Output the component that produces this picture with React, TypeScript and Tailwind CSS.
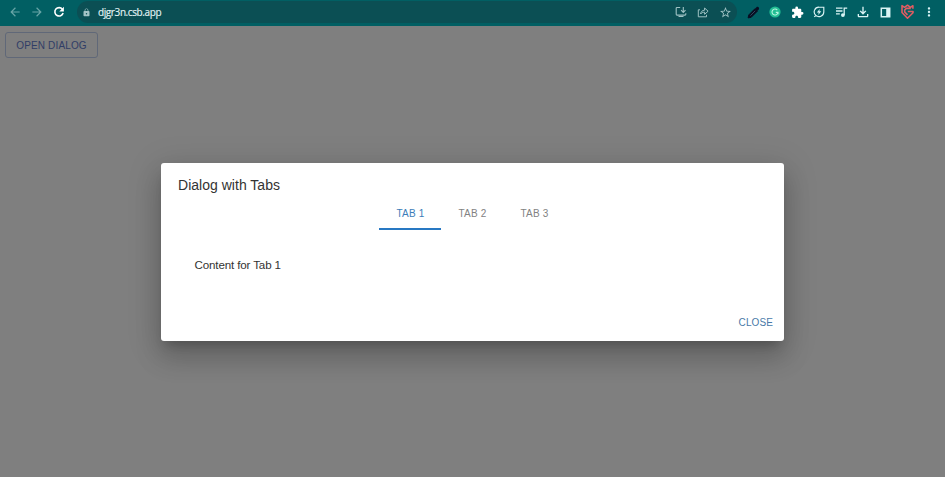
import { useState } from "react";
import type { ReactNode } from "react";
import { MdArrowBack, MdArrowForward, MdLock, MdStarBorder, MdExtension, MdMoreVert, MdOutlineFileDownload } from "react-icons/md";

function Slot({ children }: { children: ReactNode }) {
  return <span className="flex h-[22px] w-[22px] shrink-0 items-center justify-center">{children}</span>;
}

function ReloadIcon() {
  return (
    <svg width="12" height="12" viewBox="0 0 12 12" fill="none" className="text-white">
      <path d="M9.4 3.2A4.2 4.2 0 1 0 10.1 7" stroke="currentColor" strokeWidth="1.6" />
      <path d="M10.9.8v4.6H6.3Z" fill="currentColor" />
    </svg>
  );
}

function InstallIcon() {
  return (
    <svg width="12" height="12" viewBox="0 0 12 12" fill="none" stroke="currentColor" strokeWidth="1.1">
      <path d="M5.2 1.5H2a.8.8 0 0 0-.8.8v6c0 .5.3.8.8.8h8c.5 0 .8-.3.8-.8V7.3M3.5 10.5h5M8.3 1v5M6.1 4.2l2.2 2.2 2.2-2.2" />
    </svg>
  );
}

function ShareIcon() {
  return (
    <svg width="12" height="12" viewBox="0 0 12 12" fill="none" stroke="currentColor" strokeWidth="1">
      <path d="M3 3.8H1.3v7h8.2V8.8M3.6 8c.3-2.4 1.7-3.7 4-3.8V2l3.5 3.2-3.5 3.1V6.2c-1.8 0-3 .5-4 1.8Z" strokeLinejoin="round" />
    </svg>
  );
}

function PenIcon() {
  return (
    <svg width="13" height="13" viewBox="0 0 13 13">
      <path d="m1.1 11.9.7-3L7.9 2.8l2.4 2.4-6.1 6.1-3.1.6Z" fill="#080d22" stroke="#080d22" />
      <path d="M8 2.7 9.5 1.2c1.3-1.2 3.4.8 2.2 2.2l-1.4 1.5Z" fill="#080d22" />
      <path d="m3.4 9.6 4.8-4.8" stroke="#3c5870" strokeWidth=".8" />
    </svg>
  );
}

function GrammarIcon() {
  return (
    <svg width="12" height="12" viewBox="0 0 12 12" fill="none">
      <circle cx="6" cy="6" r="5.6" fill="#22bd93" />
      <path d="M8.3 4.1A3 3 0 1 0 9 6.4H6.8M9 6.3v2" stroke="#b5f5df" strokeWidth="1.1" />
    </svg>
  );
}

function SaverIcon() {
  return (
    <svg width="12" height="12" viewBox="0 0 12 12" fill="none" stroke="currentColor" strokeWidth="1.15">
      <path d="M10.8 1.2v4.7a4.8 4.8 0 0 1-8 3.5 4.7 4.7 0 0 1 3.3-8.2h4.7ZM2.8 9.4l-1.5 1.5" />
      <path d="M6.7 2.9 3.8 6.5h1.9l-.4 2.6 3-3.8H6.4l.3-2.4Z" fill="currentColor" stroke="none" />
    </svg>
  );
}

function PlaylistIcon() {
  return (
    <svg width="13" height="12" viewBox="0 0 13 12" fill="none">
      <path d="M1 2.2h6.5M1 5h6.5M1 7.8h3.8M9.2 9V2.1h3" stroke="currentColor" strokeWidth="1.3" />
      <circle cx="7.9" cy="9.1" r="1.9" fill="currentColor" />
    </svg>
  );
}

function PanelIcon() {
  return (
    <svg width="11" height="11" viewBox="0 0 11 11" fill="none">
      <path d="M1.3 1.2h8.4v8.6H1.3Z" stroke="currentColor" strokeWidth="1.5" />
      <path d="M6.2 1h3.7v9H6.2Z" fill="currentColor" />
    </svg>
  );
}

function ShieldIcon() {
  return (
    <svg width="15" height="16" viewBox="0 0 15 16" fill="none" stroke="#e05c62" strokeLinejoin="round">
      <path d="M12.9 4.8V1.7l-2.4 1.6-3-2.1-3 2.1L2 1.7v6.8l5.5 5.7L13 8.7V7.5H7.8M10.8 4.4H6.3L4.7 6v2l2.8 2.9" strokeWidth="1.6" />
    </svg>
  );
}

function Toolbar() {
  return (
    <header className="flex h-[26px] items-start bg-[#015f63] pl-1 pt-px text-[#d9f3f4]">
      <nav className="flex w-[73px] text-[#68a5a7]">
        <Slot><MdArrowBack size={14} /></Slot>
        <Slot><MdArrowForward size={14} /></Slot>
        <Slot><ReloadIcon /></Slot>
      </nav>
      <div className="flex h-[22px] w-[660px] items-center rounded-full bg-[#0b4f54] pl-[5px]">
        <MdLock size={9} className="text-[#a4c4c6]" />
        <span className="ml-[7px] flex-1 font-['Open_Sans',sans-serif] text-[10px] leading-none tracking-[-0.4px] text-[#e4f4f4] [-webkit-text-stroke:0.15px]">djgr3n.csb.app</span>
        <div className="flex pr-px text-[#9fc2c4]">
          <Slot><InstallIcon /></Slot>
          <Slot><ShareIcon /></Slot>
          <Slot><MdStarBorder size={13} /></Slot>
        </div>
      </div>
      <div className="ml-[5px] flex">
        <Slot><PenIcon /></Slot>
        <Slot><GrammarIcon /></Slot>
        <Slot><MdExtension size={13} className="text-white" /></Slot>
        <Slot><SaverIcon /></Slot>
        <Slot><PlaylistIcon /></Slot>
        <Slot><MdOutlineFileDownload size={16} /></Slot>
        <Slot><PanelIcon /></Slot>
        <Slot><ShieldIcon /></Slot>
        <Slot><MdMoreVert size={14} /></Slot>
      </div>
    </header>
  );
}

const tabs = ["Tab 1", "Tab 2", "Tab 3"];

export default function App() {
  const [active, setActive] = useState(0);
  const [open, setOpen] = useState(true);
  return (
    <div className="flex h-screen flex-col overflow-hidden bg-[#7f7f7f] font-['Liberation_Sans',Arial,sans-serif]">
      <Toolbar />
      <main className="flex flex-1 flex-col items-center">
        <div className="flex h-[137px] w-full items-start pl-[5px] pt-[6px]">
          <button onClick={() => setOpen(true)} className="h-[26px] w-[93px] rounded-[3px] border border-[#606878] pt-px text-[10px] leading-none tracking-[0.15px] whitespace-nowrap text-[#303d66]">OPEN DIALOG</button>
        </div>
        {open && (
          <section role="dialog" className="flex h-[178px] w-[623px] flex-col rounded-[3px] bg-white shadow-[0_8px_10px_-5px_rgba(0,0,0,0.2),0_17px_26px_2px_rgba(0,0,0,0.14),0_6px_32px_5px_rgba(0,0,0,0.12)]">
            <h2 className="h-[33px] pl-[17px] pt-[12px] text-[14px] leading-[20px] tracking-[0.02px] text-[#333]">Dialog with Tabs</h2>
            <div className="flex h-[34px] pl-[218px]">
              {tabs.map((tab, i) => (
                <button key={tab} onClick={() => setActive(i)} className={`w-[62px] border-b-2 pt-[3px] pl-px text-[10px] leading-none tracking-[0.2px] uppercase ${i === active ? "border-[#2878c3] text-[#3b7db9]" : "border-transparent text-[#828282]"}`}>{tab}</button>
              ))}
            </div>
            <p className="flex-1 pl-[33.5px] pt-[26px] text-[11.6px] leading-[17px] tracking-[-0.14px] text-[#333]">Content for {tabs[active]}</p>
            <div className="flex h-[36px] items-center justify-end pr-[11px]">
              <button onClick={() => setOpen(false)} className="text-[10px] leading-none tracking-[0.1px] text-[#4979a8]">CLOSE</button>
            </div>
          </section>
        )}
      </main>
    </div>
  );
}
